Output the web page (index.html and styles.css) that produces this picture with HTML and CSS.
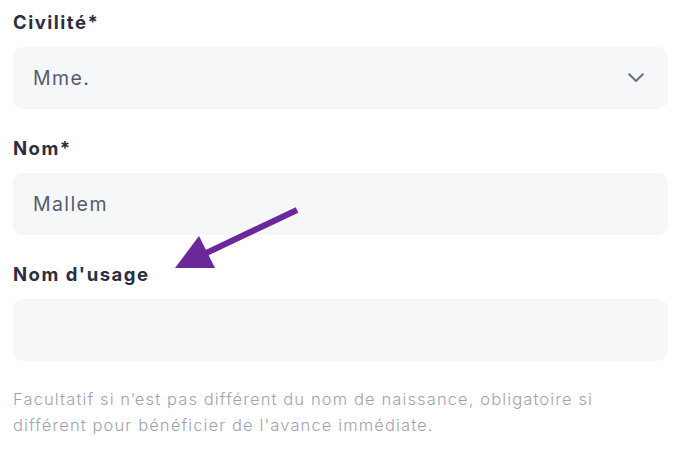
FILE: index.html
```html
<!DOCTYPE html>
<html lang="fr">
<head>
<meta charset="utf-8">
<link rel="stylesheet" href="styles.css">
</head>
<body>
<div class="form">
  <div class="field">
    <label class="label">Civilité*</label>
    <div class="box select">
      <span class="value">Mme.</span>
      <svg class="chev" width="16" height="10" viewBox="0 0 16 10"><path d="M1.2 1.2 L8 8 L14.8 1.2" fill="none" stroke="#6c6f86" stroke-width="2" stroke-linecap="round" stroke-linejoin="round"/></svg>
    </div>
  </div>
  <div class="field">
    <label class="label">Nom*</label>
    <div class="box"><span class="value">Mallem</span></div>
  </div>
  <div class="field last">
    <label class="label">Nom d'usage</label>
    <div class="box"></div>
  </div>
  <p class="help">Facultatif si n’est pas différent du nom de naissance, obligatoire si différent pour bénéficier de l'avance immédiate.</p>
  <svg class="arrow" width="685" height="458" viewBox="0 0 685 458">
    <line x1="297" y1="210" x2="200" y2="256" stroke="#6c279b" stroke-width="6"/>
    <polygon points="175,268 199,236 215,268" fill="#6c279b"/>
  </svg>
</div>
</body>
</html>
```
FILE: styles.css
```css
html, body {
  margin: 0;
  padding: 0;
  background: #ffffff;
}
body {
  font-family: Inter, "Noto Sans", sans-serif;
}
.form {
  position: relative;
  padding: 9px 17px 0 13px;
}
.field {
  display: flex;
  flex-direction: column;
  margin-bottom: 26px;
}
.field.last {
  margin-bottom: 0;
}
.label {
  font-size: 18.5px;
  line-height: 26px;
  font-weight: 700;
  color: #2c2e3f;
  letter-spacing: 1.5px;
  margin-bottom: 12px;
}
.box {
  height: 62px;
  background: #f6f7f9;
  border-radius: 10px;
  display: flex;
  align-items: center;
  justify-content: space-between;
  padding: 0 24px 0 20px;
  box-sizing: border-box;
}
.value {
  font-size: 19.5px;
  color: #565a70;
  letter-spacing: 1.4px;
}
.chev {
  display: block;
}
.help {
  margin: 25px 0 0 0;
  max-width: 610px;
  font-size: 16.5px;
  line-height: 26px;
  font-weight: 300;
  color: #9fa2b4;
  letter-spacing: 1.12px;
}
.arrow {
  position: absolute;
  left: 0;
  top: 0;
  pointer-events: none;
}
```
